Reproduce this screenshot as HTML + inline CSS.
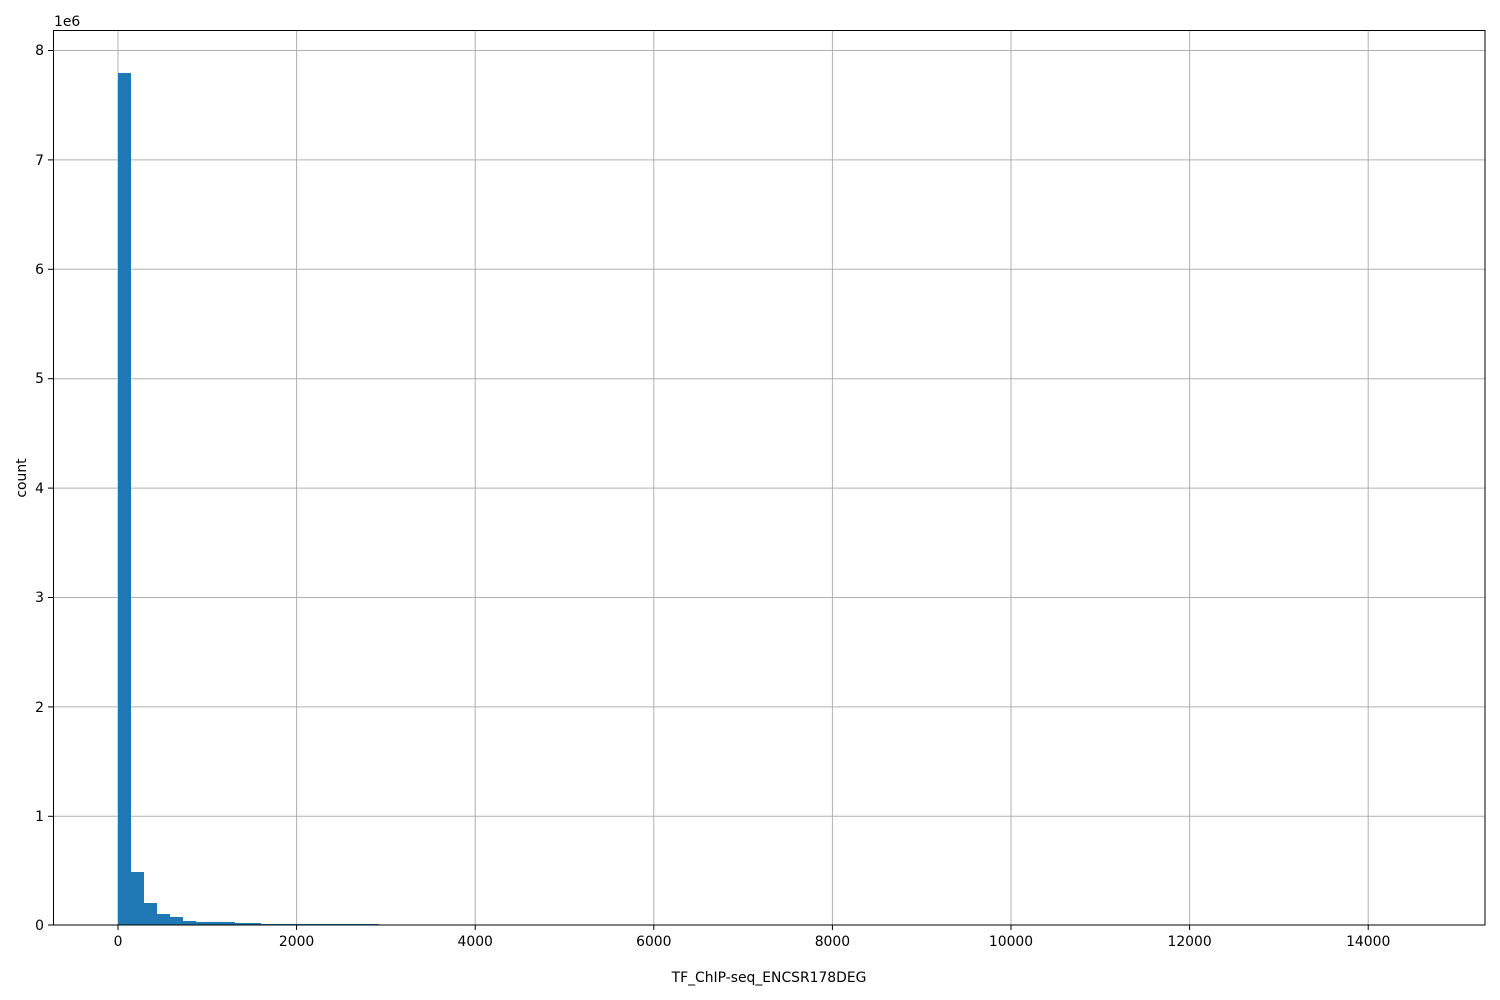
<!DOCTYPE html>
<html><head><style>body{margin:0;background:#fff}svg{display:block}</style></head><body>
<svg width="1500" height="1000" xmlns="http://www.w3.org/2000/svg" font-family="DejaVu Sans, Liberation Sans, sans-serif" font-size="13.9" fill="#000">
<g stroke="#b0b0b0" stroke-width="1">
<line x1="118" y1="31" x2="118" y2="925"/><line x1="296.6" y1="31" x2="296.6" y2="925"/><line x1="475.2" y1="31" x2="475.2" y2="925"/><line x1="653.8" y1="31" x2="653.8" y2="925"/><line x1="832.4" y1="31" x2="832.4" y2="925"/><line x1="1011" y1="31" x2="1011" y2="925"/><line x1="1189.6" y1="31" x2="1189.6" y2="925"/><line x1="1368.2" y1="31" x2="1368.2" y2="925"/>
<line x1="53" y1="50.5" x2="1485" y2="50.5"/><line x1="53" y1="159.9" x2="1485" y2="159.9"/><line x1="53" y1="269.3" x2="1485" y2="269.3"/><line x1="53" y1="378.7" x2="1485" y2="378.7"/><line x1="53" y1="488.1" x2="1485" y2="488.1"/><line x1="53" y1="597.5" x2="1485" y2="597.5"/><line x1="53" y1="706.9" x2="1485" y2="706.9"/><line x1="53" y1="816.3" x2="1485" y2="816.3"/>
</g>
<g fill="#1f77b4">
<rect x="118" y="73" width="13" height="852"/><rect x="131" y="872" width="13" height="53"/><rect x="144" y="903" width="13" height="22"/><rect x="157" y="914" width="13" height="11"/><rect x="170" y="917" width="13" height="8"/><rect x="183" y="921" width="13" height="4"/><rect x="196" y="922" width="39" height="3"/><rect x="235" y="923" width="26" height="2"/><rect x="261" y="924" width="118" height="1"/>
</g>
<rect x="53.5" y="30.5" width="1431.5" height="894.5" fill="none" stroke="#000" stroke-width="1"/>
<g stroke="#000"><line x1="118" y1="925" x2="118" y2="930"/><line x1="296.6" y1="925" x2="296.6" y2="930"/><line x1="475.2" y1="925" x2="475.2" y2="930"/><line x1="653.8" y1="925" x2="653.8" y2="930"/><line x1="832.4" y1="925" x2="832.4" y2="930"/><line x1="1011" y1="925" x2="1011" y2="930"/><line x1="1189.6" y1="925" x2="1189.6" y2="930"/><line x1="1368.2" y1="925" x2="1368.2" y2="930"/>
<line x1="48" y1="925" x2="53" y2="925"/><line x1="48" y1="816.3" x2="53" y2="816.3"/><line x1="48" y1="706.9" x2="53" y2="706.9"/><line x1="48" y1="597.5" x2="53" y2="597.5"/><line x1="48" y1="488.1" x2="53" y2="488.1"/><line x1="48" y1="378.7" x2="53" y2="378.7"/><line x1="48" y1="269.3" x2="53" y2="269.3"/><line x1="48" y1="159.9" x2="53" y2="159.9"/><line x1="48" y1="50.5" x2="53" y2="50.5"/></g>
<g text-anchor="middle"><text x="118" y="946">0</text><text x="296.6" y="946">2000</text><text x="475.2" y="946">4000</text><text x="653.8" y="946">6000</text><text x="832.4" y="946">8000</text><text x="1011" y="946">10000</text><text x="1189.6" y="946">12000</text><text x="1368.2" y="946">14000</text></g>
<g text-anchor="end"><text x="44" y="930">0</text><text x="44" y="821">1</text><text x="44" y="712">2</text><text x="44" y="602">3</text><text x="44" y="493">4</text><text x="44" y="383">5</text><text x="44" y="274">6</text><text x="44" y="165">7</text><text x="44" y="55">8</text></g>
<text x="54" y="26">1e6</text>
<text x="769" y="982" text-anchor="middle">TF_ChIP-seq_ENCSR178DEG</text>
<text transform="translate(26,478) rotate(-90)" text-anchor="middle">count</text>
</svg>
</body></html>
